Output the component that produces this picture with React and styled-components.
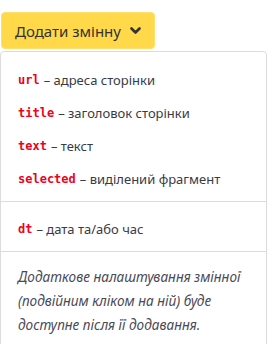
import React from "react";
import styled, { createGlobalStyle } from "styled-components";

const Global = createGlobalStyle`
  html, body { margin: 0; padding: 0; background: #fff; }
  body { font-family: "Noto Sans", "Open Sans", sans-serif; }
`;

const Page = styled.div`
  width: 268px;
  padding-top: 12px;
  display: flex;
  flex-direction: column;
  align-items: flex-start;
`;

const Button = styled.button`
  margin-left: 1px;
  height: 37px;
  padding: 0 13px 0 13px;
  display: flex;
  align-items: center;
  gap: 9px;
  background: #ffd94a;
  border: 1px solid #ffe06a;
  border-radius: 4px;
  font-family: "Noto Sans", "Open Sans", sans-serif;
  font-size: 15px;
  color: #333;
  cursor: pointer;
`;

const Menu = styled.div`
  box-sizing: border-box;
  margin-top: 2px;
  width: 267px;
  border: 1px solid #dcdcdc;
  border-radius: 4px;
  padding: 11px 0 0;
  background: #fff;
`;

const Item = styled.div`
  height: 33px;
  padding: 0 17px;
  display: flex;
  align-items: center;
  font-size: 13px;
  color: #3a3a44;
  white-space: nowrap;
`;

const Code = styled.code`
  font-family: "DejaVu Sans Mono", "Liberation Mono", monospace;
  font-weight: bold;
  font-size: 12px;
  color: #f0001c;
  margin-right: 4px;
`;

const Divider = styled.div`
  height: 1px;
  background: #dcdcdc;
  margin: ${(p) => p.$m};
`;

const Note = styled.p`
  margin: 0;
  padding: 13px 14px 12px 17px;
  font-style: italic;
  font-size: 13.6px;
  line-height: 24px;
  color: #4a4a55;
`;

const Chevron = () => (
  <svg width="11" height="8" viewBox="0 0 11 8">
    <path d="M1.5 1.5 L5.5 5.5 L9.5 1.5" fill="none" stroke="#333" strokeWidth="2.6" strokeLinecap="round" strokeLinejoin="round" />
  </svg>
);

const items = [
  ["url", "адреса сторінки"],
  ["title", "заголовок сторінки"],
  ["text", "текст"],
  ["selected", "виділений фрагмент"],
];

export default function App() {
  return (
    <Page>
      <Global />
      <Button>
        Додати змінну <Chevron />
      </Button>
      <Menu>
        {items.map(([c, t]) => (
          <Item key={c}>
            <Code>{c}</Code>– {t}
          </Item>
        ))}
        <Divider $m="6px 0 10px" />
        <Item>
          <Code>dt</Code>– дата та/або час
        </Item>
        <Divider $m="6px 0 0" />
        <Note>
          Додаткове налаштування змінної (подвійним кліком на ній) буде доступне після її додавання.
        </Note>
      </Menu>
    </Page>
  );
}
